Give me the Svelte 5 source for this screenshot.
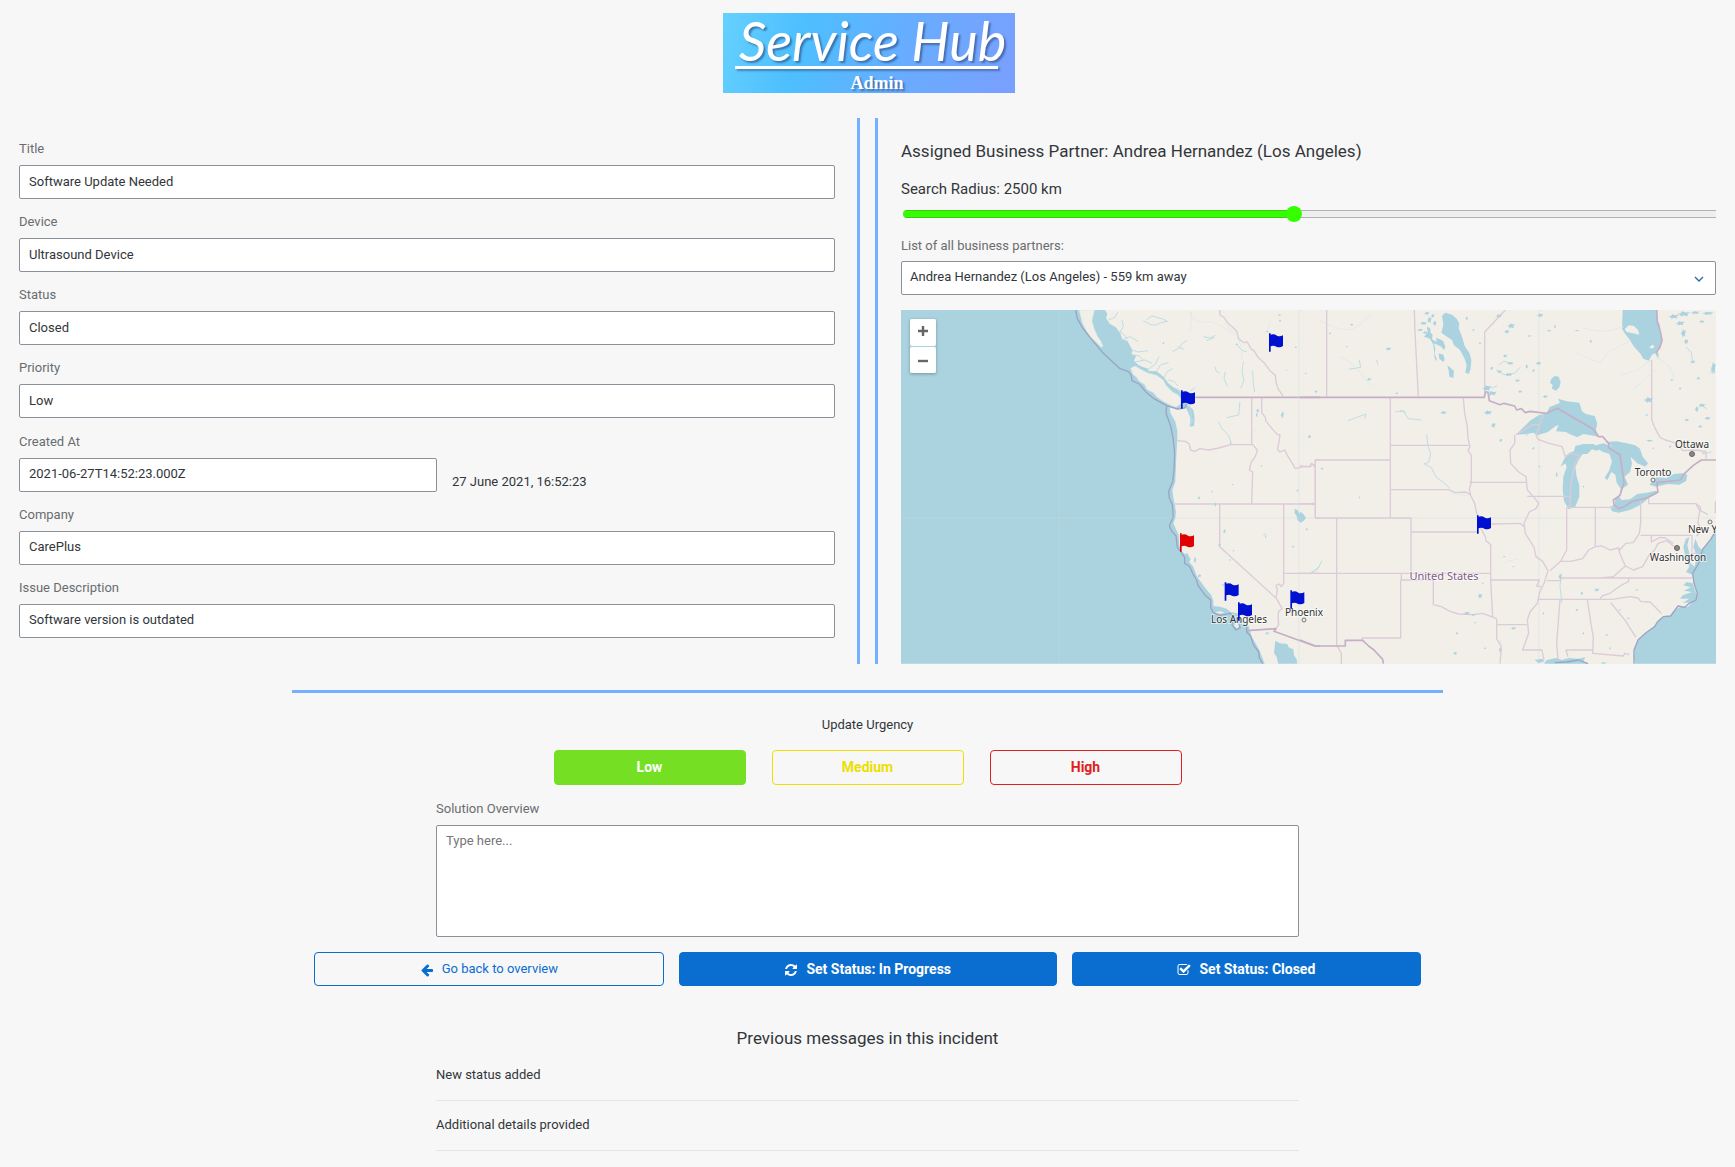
<script>
  let radius = $state(2500);
  let urgency = $state('Low');
  let solution = $state('');
  let partner = $state('Andrea Hernandez (Los Angeles) - 559 km away');

  const minRadius = 200;
  const maxRadius = 5000;
  let filled = $derived(((radius - minRadius) / (maxRadius - minRadius)) * 100);

  const fields = [
    { id: 'title', label: 'Title', value: 'Software Update Needed' },
    { id: 'device', label: 'Device', value: 'Ultrasound Device' },
    { id: 'status', label: 'Status', value: 'Closed' },
    { id: 'priority', label: 'Priority', value: 'Low' },
    { id: 'created', label: 'Created At', value: '2021-06-27T14:52:23.000Z', note: '27 June 2021, 16:52:23' },
    { id: 'company', label: 'Company', value: 'CarePlus' },
    { id: 'issue', label: 'Issue Description', value: 'Software version is outdated' }
  ];

  const levels = ['Low', 'Medium', 'High'];
  const messages = ['New status added', 'Additional details provided'];

  const flagShape =
    'M0 0h5v4q10 -3 19 3q8 4 18 -1v32q-10 7 -20 2q-9 -5 -17 -1v16h-5z';
  const flags = [
    { x: 1137, y: 100 },
    { x: 873, y: 271 },
    { x: 870, y: 700, own: true },
    { x: 1004, y: 847 },
    { x: 1044, y: 907 },
    { x: 1201, y: 871 },
    { x: 1761, y: 646 }
  ];

  // Small lakes: centre x, centre y, half width, half height.
  const westLakes = [
    [820, 130, 3, 4], [1168, 45, 5, 3], [1170, 62, 4, 3], [1132, 95, 4, 3], [1217, 142, 4, 3], [1247, 220, 3, 3],
    [1278, 275, 4, 4], [1103, 332, 5, 6], [1100, 345, 3, 8], [1177, 345, 5, 11], [1258, 410, 5, 4],
    [1022, 430, 3, 4], [1114, 498, 3, 3], [1028, 554, 4, 2], [1222, 572, 3, 4], [966, 575, 2, 4], [927, 594, 4, 5],
    [976, 614, 3, 7], [1267, 612, 2, 6], [1003, 694, 4, 7], [988, 735, 4, 5], [1030, 752, 2, 3], [1020, 780, 3, 3],
    [1209, 740, 4, 3], [1250, 688, 4, 4], [1127, 710, 2, 6], [1040, 133, 4, 3], [1189, 211, 3, 2], [1131, 1000, 6, 4],
    [915, 780, 4, 10], [928, 828, 6, 5], [1000, 857, 5, 2]
  ];
  const eastLakes = [
    [265, 147, 9, 5], [207, 238, 8, 4], [155, 74, 5, 3], [90, 100, 4, 3], [140, 140, 4, 2], [47, 275, 4, 3],
    [290, 280, 5, 3], [66, 506, 5, 3], [28, 410, 4, 5], [178, 593, 2, 4], [563, 338, 13, 7], [580, 376, 7, 8],
    [602, 421, 5, 5], [560, 265, 13, 9], [575, 280, 16, 7], [596, 48, 10, 5], [633, 78, 12, 8], [620, 95, 8, 6],
    [720, 46, 10, 6], [765, 80, 3, 6], [872, 124, 4, 5], [830, 92, 8, 2], [747, 92, 6, 3], [615, 168, 7, 5],
    [630, 190, 10, 4], [598, 215, 8, 5], [625, 224, 13, 5], [575, 205, 5, 5], [652, 242, 8, 4], [715, 190, 9, 5],
    [700, 212, 5, 4], [680, 200, 4, 7], [735, 290, 9, 4], [660, 275, 7, 4], [688, 108, 6, 3],
    [1120, 50, 16, 7], [1150, 42, 20, 8], [1185, 38, 14, 5], [1140, 70, 14, 7], [1150, 100, 8, 13], [1158, 125, 7, 8],
    [1222, 40, 18, 5], [1205, 65, 9, 4], [1240, 205, 7, 20], [1178, 186, 8, 5], [1195, 235, 6, 4], [1045, 300, 14, 9],
    [1040, 345, 5, 3], [1205, 316, 11, 6], [1190, 328, 6, 9], [1222, 355, 10, 5], [1200, 380, 7, 4], [1160, 360, 7, 4],
    [1140, 266, 4, 4], [1115, 240, 5, 3], [1048, 422, 11, 3], [1110, 440, 4, 4], [1060, 445, 3, 3], [770, 524, 3, 9],
    [850, 560, 3, 3], [700, 445, 4, 4], [680, 405, 3, 3], [718, 500, 3, 3], [500, 940, 10, 5], [520, 945, 7, 3],
    [540, 888, 7, 8], [548, 850, 3, 3], [525, 968, 5, 2], [470, 1000, 4, 4], [465, 1060, 6, 5], [555, 1045, 4, 3],
    [600, 1050, 4, 8], [640, 985, 9, 4], [730, 940, 3, 4], [845, 880, 4, 6], [890, 870, 8, 5], [830, 930, 4, 4],
    [850, 1000, 3, 4], [920, 1005, 5, 3], [930, 1045, 3, 4], [960, 930, 3, 3], [985, 955, 4, 3], [1010, 870, 4, 3],
    [910, 1089, 10, 3], [780, 830, 5, 9], [612, 770, 5, 2], [640, 800, 4, 2], [430, 338, 10, 5],
    [500, 55, 4, 6], [520, 90, 4, 3], [540, 130, 4, 3], [380, 40, 8, 5], [398, 48, 6, 6], [370, 70, 11, 5],
    [360, 90, 9, 4], [388, 60, 7, 10], [375, 98, 9, 4], [404, 70, 6, 8]
  ];

  // Jagged outline, so that a lake does not look like an oval.
  const lakeShape = ([x, y, w, h]) =>
    `M${x - w} ${y}L${x - w * 0.4} ${y - h * 0.3}L${x - w * 0.2} ${y - h}L${x + w * 0.3} ${y - h * 0.6}` +
    `L${x + w} ${y - h * 0.7}L${x + w * 0.6} ${y + h * 0.2}L${x + w * 0.7} ${y + h * 0.8}` +
    `L${x} ${y + h * 0.5}L${x - w * 0.3} ${y + h}L${x - w * 0.5} ${y + h * 0.3}Z`;

  const cities = [
    { name: 'Los Angeles', x: 338, y: 313 },
    { name: 'Phoenix', x: 403, y: 306 },
    { name: 'Ottawa', x: 791, y: 138 },
    { name: 'Toronto', x: 752, y: 166 },
    { name: 'Washington', x: 777, y: 251 },
    { name: 'New York', x: 809, y: 223 }
  ];
</script>

<div class="page">
  <header>
    <div class="logo">
      <span class="brand">Service Hub</span>
      <span class="rule"></span>
      <span class="role">Admin</span>
    </div>
  </header>

  <main>
    <div class="columns">
      <section class="details">
        {#each fields as f (f.id)}
          <div class="field">
            <label for={f.id}>{f.label}</label>
            {#if f.note}
              <div class="with-note">
                <input id={f.id} type="text" value={f.value} readonly />
                <span>{f.note}</span>
              </div>
            {:else}
              <input id={f.id} type="text" value={f.value} readonly />
            {/if}
          </div>
        {/each}
      </section>

      <section class="partner">
        <h2>Assigned Business Partner: Andrea Hernandez (Los Angeles)</h2>
        <label class="radius" for="radius">Search Radius: {radius} km</label>
        <div class="slider">
          <input id="radius" type="range" min={minRadius} max={maxRadius} step="100" bind:value={radius} style="--filled: {filled}%" />
        </div>
        <label class="list-label" for="partner">List of all business partners:</label>
        <div class="select">
          <select id="partner" bind:value={partner}>
            <option>Andrea Hernandez (Los Angeles) - 559 km away</option>
          </select>
          <svg class="chevron" viewBox="0 0 10 6" aria-hidden="true"><path d="M1 1l4 4l4 -4" /></svg>
        </div>

        <div class="map">
          <svg class="chart" viewBox="0 0 815 354" preserveAspectRatio="xMidYMid slice" role="img" aria-label="Map of business partners">
            <rect class="land" width="815" height="354" />
            <!-- West -->
            <g transform="translate(-11 -10) scale(0.33333)">
              <path class="water" d="M33 30H645L652 42L648 55L660 72L678 82L690 98L697 118L712 122L722 140L728 152L724 162L738 168L732 182L745 195L760 202L775 206V213L800 214L822 232L835 250L850 262L868 270L880 285L890 295L888 310L898 318L910 330L914 355L912 378L900 380L904 362L896 340L888 324L865 326L838 318L842 340L856 365L862 392L862 415L861 432L859 470L857 520L856 545L847 570L850 592L854 612L858 635L856 655L850 670L858 688L866 705L868 735L874 752L884 762L892 760L902 778L898 786L910 800L920 828L932 845L948 866L964 886L970 902L970 918L990 920L1010 926L1022 936L1042 940L1050 952L1060 968L1074 974L1080 990L1084 1008L1096 1028L1108 1050L1116 1070L1124 1091H33Z" />
              <path class="land shore" d="M567 30H614L610 44L606 62L612 84L622 108L632 122L639 138L634 142L620 128L602 112L590 94L578 72Z" />
              <path class="land shore" d="M722 204L736 198L752 208L772 218L800 226L820 240L828 256L848 276L864 284L874 298L872 312L858 322L838 314L816 302L800 290L790 278L770 268L764 254L748 244L738 230L728 222Z" />
              <path class="land" d="M974 938l14 -4l16 3l-12 4zM1030 975l12 -4l6 8l-8 6z" />
              <path class="water" d="M1156 1022L1170 1030L1192 1032L1196 1042L1210 1048L1212 1066L1220 1078L1222 1091H1165L1160 1072L1152 1058Z" />
              <path class="water" d="M1214 626L1222 630L1230 642L1244 648L1246 656L1236 656L1232 668L1222 660L1220 648L1214 640Z" />
              <path class="stream" d="M680 92l18 8l14 16M700 118l20 -8l24 14M728 150l16 6l30 -4M724 164l24 4l12 12M735 186l30 -6l22 10M775 208l22 -16l10 -22M800 214l12 -20l24 -6M822 232l10 -18l16 -8M834 240l18 4l12 14M655 60l20 -8l8 -16M690 98l10 -20l-4 -18M770 60q14 -18 30 -8q20 4 32 12M760 62q20 14 36 14q14 -10 38 -12M848 155l20 -12l10 -14l14 -8M862 140l20 8M860 268l14 12l12 20M898 316l6 30l-4 30l14 -24M886 300l10 22" />
              <path class="stream" d="M1060 185l-4 30l6 26l-10 24M1088 212l2 40l4 24M1006 215l-4 20l10 24M940 110l20 4l16 -8M950 122l24 -10M1040 133l16 18l14 4M975 200l4 14l10 6M1050 305l-4 40l-36 8M985 365l10 20l20 20l8 22M1262 818l14 -8l14 -14M916 262l-16 12M996 854l14 -4M1120 706l8 -6" />
              <path class="river" d="M1056 180l-2 -40l-12 -30l-40 -40M900 35q10 40 60 30q40 10 70 40M1142 62l-8 26l-14 12M905 34l-4 60M1100 380l-20 30" />
              <path class="state" d="M1085 294V433M1115 294V338L1126 352L1128 364L1148 388L1162 404L1170 404L1168 420L1162 448L1170 456L1184 450L1192 466L1202 482L1216 506L1240 500L1262 500L1264 490L1276 498M862 422L886 424L898 432L902 450L914 454L930 446L956 450L986 444L1022 434H1088L1102 450L1096 470L1084 486L1078 510L1088 516L1085 611M854 612H1276M989 612V740L1160 896M1181 612V850L1174 860L1168 852L1158 856L1162 870L1158 896M1160 896L1176 926L1166 934L1164 950L1166 974L1158 986M1181 820H1290M1276 655V480H1290M1276 654H1290M989 30L990 45L1002 52L1014 70L1028 82L1040 94L1046 116L1062 128L1072 126L1084 148L1092 152L1104 172L1122 188L1140 212L1156 226L1158 246L1164 266L1180 290" />
              <path class="nation" d="M916 292H1290M1072 992L1158 986L1152 994L1274 1038H1290" />
              <path class="sea-border" d="M557 30L562 56L578 84L600 112L640 160L690 206L714 214L724 226L726 242L748 252L768 276L792 296L830 317L862 327L884 324L890 312M830 317L828 340L842 378L850 420L854 460L852 510L848 545L836 574L838 594L847 614L850 650L838 678L846 694L858 708L862 742L870 752L884 772L884 790L898 798L908 820L920 840L924 856L946 886L962 900L962 922L970 938L990 946L1020 940L1030 950L1026 974L1038 990L1050 984L1048 974M1070 980L1070 996L1082 1008L1090 1034L1106 1056L1108 1074L1118 1091" />
              {#each westLakes as lake}
                <path class="water" d={lakeShape(lake)} />
              {/each}
            </g>
            <!-- East -->
            <g transform="translate(399 -10) scale(0.33333)">
              <path class="water" d="M1248 690L1232 718L1222 732L1206 746L1204 764L1190 796L1178 820L1180 844L1192 876L1190 896L1176 908L1164 920L1142 920L1124 930L1110 948L1090 950L1076 960L1064 980L1040 998L1016 1018L1004 1044L1002 1072L1006 1091H1248Z" />
              <path class="water" d="M1176 824L1158 816L1168 800L1156 770L1150 740L1158 716L1168 712L1162 736L1168 760L1172 790L1184 800L1190 770L1180 740L1186 716L1196 740L1206 750L1196 790ZM1178 850L1160 846L1150 856L1172 862L1152 872L1176 876L1148 886L1140 896L1168 896L1148 908L1180 908L1192 890Z" />
              <path class="water" d="M968 30H1072L1072 60L1080 76L1078 92L1088 124L1080 142L1070 152L1076 162L1074 178L1066 160L1056 164L1046 182L1030 176L1020 160L1002 140L988 118L974 100L966 86Z" />
              <path class="land" d="M974 88L986 76L1002 78L1014 90L1018 104L1000 100L980 96ZM1048 142l10 -8l6 6l-8 6z" />
              <path class="water" d="M426 48L436 38L456 44L470 56L478 70L476 84L486 110L494 138L508 158L514 180L512 206L506 222L496 218L500 196L494 176L480 150L462 136L456 120L438 108L424 98L430 74Z" />
              <path class="water" d="M380 80L390 84L392 98L398 104L396 118L410 126L408 114L420 118L430 124L436 140L432 150L424 140L412 134L402 130L406 146L404 160L412 184L404 176L402 152L400 134L390 116L372 110L384 96ZM416 160L430 164L434 178L430 186L418 176ZM442 196L452 204L462 212L460 234L448 230L446 212Z" />
              <path class="water" d="M754 236L764 228L776 230L782 246L778 262L768 272L756 266L758 254L750 248Z" />
              <path class="water" d="M648 404L668 384L690 362L716 346L740 340L748 322L780 308L774 296L800 304L838 308L846 334L858 342L884 348L892 370L888 390L896 410L872 406L850 402L832 412L808 402L798 396L768 394L776 374L790 368L764 380L744 396L712 406L700 398L680 402Z" />
              <path class="water" d="M782 500L792 478L806 460L822 454L826 438L850 432L880 432L904 446L890 452L876 448L862 462L848 462L836 480L826 502L830 530L838 556L838 590L826 620L806 628L792 604L788 568L790 530L800 500L796 490Z" />
              <path class="water" d="M888 436L910 430L938 440L916 426L950 424L980 430L1006 436L1020 446L1028 470L1044 490L1036 500L1012 490L992 470L996 490L990 516L974 530L984 554L966 566L958 588L962 566L950 548L946 524L934 516L922 540L914 534L928 510L936 484L928 462L904 454Z" />
              <path class="water" d="M930 620L944 614L946 596L956 586L964 600L990 598L1012 582L1040 578L1070 572L1074 580L1046 594L1022 614L990 630L956 638L936 634ZM1048 554L1070 532L1100 534L1122 522L1146 520L1162 524L1158 544L1138 554L1104 552L1068 560Z" />
              <path class="water" d="M732 1091L740 1080L768 1074L786 1080L806 1074L836 1076L856 1072L850 1084L864 1091ZM704 1080l22 -4l8 8l-18 6z" />
              <path class="water" d="M0 636L8 640L18 654L10 664L0 668Z" />
              <path class="stream" d="M286 336l24 -4l14 24l40 4M300 332l18 6M144 362l32 -12l22 -8l-4 14M380 405l4 34l8 22l-6 26l-14 4l22 12l14 28l20 14l22 20M34 820l20 -14l12 -24M146 208l36 -6l-4 -22M230 180l4 14M784 820l-4 40l6 50M1216 450l-10 12l28 -6M1158 140l16 18l4 30M1205 316l16 10M640 190l-30 -6l-14 12M588 210l24 14l32 -4l16 -18M558 258l20 6l14 -8M1232 220l8 -30" />
              <path class="river" d="M56 60q60 30 80 28q20 10 60 -30l20 -12M120 170l36 20l60 70M850 85l60 10l60 -14M988 124l-60 30l-30 34l-70 -30M1068 168l40 30l14 40M1054 180l-40 30l-50 14M600 1020l8 40M616 786l40 -10M456 580l44 6M1072 206l-30 24l-44 40" />
              <path class="state" d="M80 30V290M343 30L345 96L355 290M616 30L554 96V276M1055 180V360L1066 386L1080 412L1096 420L1124 428L1150 452L1190 450L1218 456V476M271 294V654M271 436H508M271 569H446L466 578L498 576L512 586M490 294L494 340L502 380L504 416L510 440L504 452L514 466V548L508 566L512 586L524 610L530 640L540 680L556 710L558 722L572 734V840L578 952M508 547H678M0 498L26 500L36 492L44 500M46 480H271M46 480V654M0 611H46M46 654H333M110 654V1038M333 654V820M333 696H532M0 820H572M304 820V840H400V914L424 920L450 934L476 942L520 944L548 940L590 956M302 840V1014H186V1022M572 840H718L710 858L724 860M590 956V1016L604 1040L600 1091M590 974H680M574 672L660 670L672 680M644 404V430L630 450L632 490L656 516L678 530L682 570L700 590L716 610L708 626L688 636L672 670L676 700L702 742L708 770L728 784L744 812L732 850L718 880L712 910L690 936L682 960L686 1000L668 1050H726L732 1080M682 589H812M708 404L714 418L748 430L786 440L796 470L812 460L838 466L822 500L812 560L810 620M800 622V750L782 784L750 812M800 622H942M886 624V740L866 750L848 776L812 784L782 784M886 740L906 738L930 750L956 744L960 762L976 798L940 830L900 834M956 752L978 730L1000 728L1018 700L1022 668V602M1022 706H1176V760L1192 760M1054 706V726L1080 712L1096 714L1120 730M976 798L1000 810L1028 800L1048 764L1064 750L1074 730L1100 722L1126 742M782 834H1176M782 834V842H740M714 898H938M986 836V844L960 858L930 880L906 888L900 898M780 900L770 1030L774 1078M862 900L876 990L880 1010L878 1060L970 1068L974 1060L988 1064M878 1050H798L804 1070M938 898L990 890L1014 894L1022 904L1050 906L1084 940M932 908L950 930L976 962L1008 1012M1046 594V611H1188L1198 630L1224 644M1188 611L1202 622L1196 650L1194 670L1204 690L1190 708M1246 604V640M112 1038L124 1060V1091M648 404L700 374H718M708 404L730 344" />
              <path class="nation" d="M0 292H553L556 276L564 276L568 302L600 314L612 310L644 318L650 330L664 326L676 338L690 334L740 340L772 325L880 388L896 410L908 410L926 430V444L960 464L972 548L960 586L940 600L942 614L956 626L972 620L998 604L1040 594L1074 576L1070 548L1142 540L1150 524L1180 496L1204 480H1248M0 1020L46 1038H136V1021H188L206 1038L222 1050L248 1078L250 1091M1070 30L1072 66L1080 90L1086 120L1080 142L1068 158" />
              <path class="sea-border" d="M1248 692L1232 718L1208 748L1196 790L1178 820L1182 850L1192 880L1188 900L1168 910L1154 922L1134 918L1112 948L1090 950L1072 966L1064 980L1036 1000L1014 1020L1002 1050V1091M764 1088L800 1086L836 1080L864 1091" />
              {#each eastLakes as lake}
                <path class="water" d={lakeShape(lake)} />
              {/each}
            </g>
            <path class="grid-line" d="M158 0V354M398 0V354M638 0V354M0 208H815" />
            <g class="dots">
              <circle cx="403" cy="310" r="2" />
              <circle cx="752" cy="170" r="2" />
              <circle cx="809" cy="212" r="2" />
              <circle cx="791" cy="144" r="2.5" class="capital" />
              <circle cx="776" cy="238" r="2.5" class="capital" />
            </g>
            <text class="country" x="543" y="270">United States</text>
            {#each cities as c (c.name)}
              <text class="city" x={c.x} y={c.y}>{c.name}</text>
            {/each}
            <g transform="translate(-11 -10) scale(0.33333)">
              {#each flags as f}
                <path class="flag" class:own={f.own} transform="translate({f.x} {f.y})" d={flagShape} />
              {/each}
            </g>
          </svg>
          <div class="zoom">
            <button type="button" aria-label="Zoom in"><svg viewBox="0 0 12 12"><path d="M6 1v10M1 6h10" /></svg></button>
            <button type="button" aria-label="Zoom out"><svg viewBox="0 0 12 12"><path d="M1 6h10" /></svg></button>
          </div>
        </div>
      </section>
    </div>

    <hr />

    <section class="update">
      <p class="urgency-title">Update Urgency</p>
      <div class="levels">
        {#each levels as l}
          <button type="button" class={l.toLowerCase()} class:active={urgency === l} onclick={() => (urgency = l)}>{l}</button>
        {/each}
      </div>
      <div class="solution">
        <label for="solution">Solution Overview</label>
        <textarea id="solution" placeholder="Type here..." bind:value={solution}></textarea>
      </div>
      <div class="actions">
        <button type="button" class="back">
          <svg viewBox="0 0 1792 1792" aria-hidden="true"><path d="M1664 896v128q0 53-32.500 90.500t-84.500 37.500h-704l293 294q38 36 38 90t-38 90l-75 76q-37 37-90 37-52 0-91-37l-651-652q-37-37-37-90 0-52 37-91l651-650q38-38 91-38 52 0 90 38l75 74q38 38 38 91t-38 91l-293 293h704q52 0 84.500 37.500t32.500 90.500z" /></svg>
          Go back to overview
        </button>
        <button type="button" class="primary">
          <svg viewBox="0 0 1792 1792" aria-hidden="true"><path d="M1639 1056q0 5-1 7-64 268-268 434.500t-478 166.500q-146 0-282.500-55t-243.500-157l-129 129q-19 19-45 19t-45-19-19-45v-448q0-26 19-45t45-19h448q26 0 45 19t19 45-19 45l-137 137q71 66 161 102t187 36q134 0 250-65t186-179q11-17 53-117 8-23 30-23h192q13 0 22.500 9.500t9.500 22.500zm25-800v448q0 26-19 45t-45 19h-448q-26 0-45-19t-19-45 19-45l138-138q-148-137-349-137-134 0-250 65t-186 179q-11 17-53 117-8 23-30 23h-199q-13 0-22.500-9.500t-9.500-22.500v-7q65-268 270-434.500t480-166.500q146 0 284 55.500t245 156.500l130-129q19-19 45-19t45 19 19 45z" /></svg>
          Set Status: In Progress
        </button>
        <button type="button" class="primary">
          <svg viewBox="0 0 1792 1792" aria-hidden="true"><path d="M1472 930v318q0 119-84.500 203.500t-203.500 84.500h-832q-119 0-203.500-84.500t-84.500-203.500v-832q0-119 84.500-203.500t203.500-84.500h832q63 0 117 25 15 7 18 23 3 17-9 29l-49 49q-10 10-23 10-3 0-9-2-23-6-45-6h-832q-66 0-113 47t-47 113v832q0 66 47 113t113 47h832q66 0 113-47t47-113v-254q0-13 9-22l64-64q10-10 23-10 6 0 12 3 20 8 20 29zm231-489l-814 814q-24 24-57 24t-57-24l-430-430q-24-24-24-57t24-57l110-110q24-24 57-24t57 24l263 263 647-647q24-24 57-24t57 24l110 110q24 24 24 57t-24 57z" /></svg>
          Set Status: Closed
        </button>
      </div>
    </section>

    <section class="history">
      <h2>Previous messages in this incident</h2>
      <ul>
        {#each messages as m}
          <li>{m}</li>
        {/each}
      </ul>
    </section>
  </main>
</div>

<style>
  :global(body) {
    margin: 0;
    background: #f7f7f7;
  }
  .page {
    padding-top: 13px;
    font-family: Roboto, "Liberation Sans", sans-serif;
    font-size: 13px;
    line-height: 20px;
    color: #32363a;
  }
  .page :is(input, select, textarea, button) {
    box-sizing: border-box;
    font: inherit;
    color: inherit;
  }
  header {
    display: flex;
    justify-content: center;
    padding-left: 3px;
  }
  .logo {
    box-sizing: border-box;
    display: flex;
    flex-direction: column;
    width: 292px;
    height: 80px;
    padding: 2px 17px 0 12px;
    background: linear-gradient(105deg, #66d1ff 0%, #4dbfff 27%, #6aabff 65%, #7a9fff 100%);
    color: #fff;
    text-shadow: 2px 2px 2px rgb(40 70 120 / 60%);
  }
  .brand {
    padding-left: 4px;
    font-family: Lato, sans-serif;
    font-size: 54px;
    font-style: italic;
    font-weight: 400;
    line-height: 51px;
    white-space: nowrap;
  }
  .rule {
    flex: none;
    height: 3px;
    background: #fff;
    box-shadow: 2px 2px 2px rgb(40 70 120 / 50%);
  }
  .role {
    padding-left: 21px;
    font-family: "Liberation Serif", serif;
    font-size: 18px;
    font-weight: 700;
    line-height: 28px;
    text-align: center;
  }

  .columns {
    display: grid;
    grid-template-columns: 1fr 1fr;
    gap: 15px;
    margin-top: 25px;
  }
  .details {
    display: flex;
    flex-direction: column;
    justify-content: space-between;
    padding: 21px 22px 26px 19px;
    border-right: 3px solid #74b0ff;
  }
  .field {
    display: flex;
    flex-direction: column;
    gap: 6px;
  }
  label {
    color: #6a6d70;
  }
  input[type='text'],
  select {
    width: 100%;
    height: 34px;
    padding: 0 9px 2px;
    border: 1px solid #89919a;
    border-radius: 2px;
    background: #fff;
    outline: none;
  }
  .with-note {
    display: flex;
    align-items: flex-end;
    gap: 15px;
  }
  .with-note input {
    flex: 0 0 418px;
    width: auto;
  }

  .partner {
    display: flex;
    flex-direction: column;
    min-width: 0;
    padding: 20px 19px 0 23px;
    border-left: 3px solid #74b0ff;
  }
  h2 {
    margin: 0;
    font-size: 17px;
    font-weight: 400;
    line-height: 26px;
  }
  .radius {
    margin-top: 13px;
    color: #32363a;
    font-size: 15px;
    line-height: 24px;
  }
  .slider {
    display: flex;
    height: 24px;
    overflow: hidden;
  }
  .slider input {
    flex: 0 0 100%;
    height: 16px;
    margin: 5px 2px;
    appearance: none;
    background: none;
  }
  .slider input::-webkit-slider-runnable-track {
    box-sizing: border-box;
    height: 8px;
    border-radius: 4px 0 0 4px;
    background:
      linear-gradient(#40c818 1px, #3f0 1px 7px, #40c818 7px) no-repeat 0 0 / var(--filled) 100%,
      linear-gradient(#b2b2b2 1px, #efefef 1px 7px, #b2b2b2 7px);
  }
  .slider input::-webkit-slider-thumb {
    width: 16px;
    height: 16px;
    margin-top: -4px;
    appearance: none;
    border-radius: 50%;
    background: #3f0;
  }
  .list-label {
    margin-top: 11px;
  }
  .select {
    position: relative;
    margin-top: 5px;
  }
  select {
    display: block;
    appearance: none;
  }
  .select select {
    padding-left: 8px;
  }
  .chevron {
    position: absolute;
    top: 15px;
    right: 12px;
    width: 10px;
    height: 6px;
    fill: none;
    stroke: #2f66ad;
    stroke-width: 1.4;
    pointer-events: none;
  }

  .map {
    position: relative;
    height: 354px;
    margin-top: 15px;
    overflow: hidden;
  }
  .chart {
    display: block;
    width: 100%;
    height: 100%;
  }
  .land {
    fill: #f2efe9;
  }
  .shore {
    stroke: #cfe3e6;
    stroke-width: 2;
  }
  .water {
    fill: #aad3df;
  }
  .stream,
  .river {
    fill: none;
    stroke: #bddde4;
    stroke-width: 3;
    stroke-linejoin: round;
  }
  .river {
    stroke: #e2e9e8;
  }
  .state {
    fill: none;
    stroke: #dccbd8;
    stroke-width: 4;
    stroke-linejoin: round;
  }
  .nation {
    fill: none;
    stroke: #c5aec6;
    stroke-width: 5;
    stroke-linejoin: round;
  }
  .sea-border {
    fill: none;
    stroke: #9aa5c2;
    stroke-width: 4;
    stroke-linejoin: round;
  }
  .grid-line {
    fill: none;
    stroke: #c8dcdd;
    stroke-opacity: 0.4;
  }
  .dots circle {
    fill: #f2efe9;
    stroke: #777;
    stroke-width: 1;
  }
  .dots .capital {
    fill: #888;
    stroke: #666;
  }
  .chart text {
    font-family: "Noto Sans", sans-serif;
    font-size: 10px;
    text-anchor: middle;
    paint-order: stroke;
    stroke: rgb(255 255 255 / 60%);
    stroke-width: 2px;
  }
  .city {
    fill: #333;
  }
  .chart .country {
    fill: #7d5d86;
    font-size: 11px;
  }
  .flag {
    fill: #0010d0;
  }
  .flag.own {
    fill: #e00000;
  }
  .zoom {
    position: absolute;
    top: 9px;
    left: 9px;
    display: flex;
    flex-direction: column;
    gap: 1px;
    box-shadow: 0 1px 3px rgb(0 0 0 / 30%);
  }
  .zoom button {
    display: grid;
    place-items: center;
    width: 26px;
    height: 27px;
    padding: 0 0 3px;
    border: 0;
    border-radius: 2px;
    background: #fff;
  }
  .zoom button + button {
    height: 26px;
    padding: 2px 0 0;
  }
  .zoom svg {
    width: 12px;
    height: 12px;
    stroke: #666;
    stroke-width: 2.4;
  }

  hr {
    box-sizing: border-box;
    width: 66.35%;
    height: 3px;
    margin: 26px auto 0;
    border: 0;
    background: #74b0ff;
  }
  .update {
    display: flex;
    flex-direction: column;
    align-items: center;
    padding-top: 22px;
  }
  .urgency-title {
    margin: 0;
  }
  .levels {
    display: flex;
    gap: 26px;
    margin-top: 15px;
  }
  .levels button {
    width: 192px;
    height: 35px;
    padding: 0 0 2px;
    border: 1px solid currentColor;
    border-radius: 4px;
    background: none;
    font-size: 14px;
    font-weight: 700;
  }
  .levels .low {
    color: #75e023;
  }
  .levels .medium {
    color: #ebe000;
  }
  .levels .high {
    color: #e02020;
  }
  .levels .active.low {
    border-color: #75e023;
    background: #75e023;
    color: #fff;
  }
  .levels .active.medium {
    border-color: #ebe000;
    background: #ebe000;
    color: #fff;
  }
  .levels .active.high {
    border-color: #e02020;
    background: #e02020;
    color: #fff;
  }
  .solution {
    display: flex;
    flex-direction: column;
    gap: 6px;
    width: 863px;
    max-width: 94%;
    margin-top: 14px;
  }
  textarea {
    display: block;
    width: 100%;
    height: 112px;
    padding: 5px 9px;
    border: 1px solid #89919a;
    border-radius: 2px;
    background: #fff;
    resize: none;
  }
  textarea::placeholder {
    color: #74777a;
  }
  .actions {
    display: flex;
    gap: 15px;
    width: 1107px;
    max-width: 96%;
    margin-top: 15px;
  }
  .actions button {
    display: flex;
    flex: 1 1 auto;
    align-items: center;
    justify-content: center;
    gap: 8px;
    height: 34px;
    padding: 0 12px 1px;
    border: 1px solid #0a6ed1;
    border-radius: 4px;
  }
  .actions svg {
    width: 14px;
    height: 14px;
    margin-top: 2px;
    fill: currentColor;
  }
  .actions .back {
    background: none;
    color: #0a6ed1;
  }
  .actions .primary {
    background: #0a6ed1;
    color: #fff;
    font-size: 14px;
    font-weight: 700;
  }
  .history {
    width: 863px;
    max-width: 94%;
    margin: 0 auto;
    padding-top: 39px;
  }
  .history h2 {
    text-align: center;
  }
  ul {
    margin: 0;
    padding: 0;
    list-style: none;
  }
  li {
    padding: 14px 0 15px;
    border-bottom: 1px solid #e5e5e5;
  }
</style>
